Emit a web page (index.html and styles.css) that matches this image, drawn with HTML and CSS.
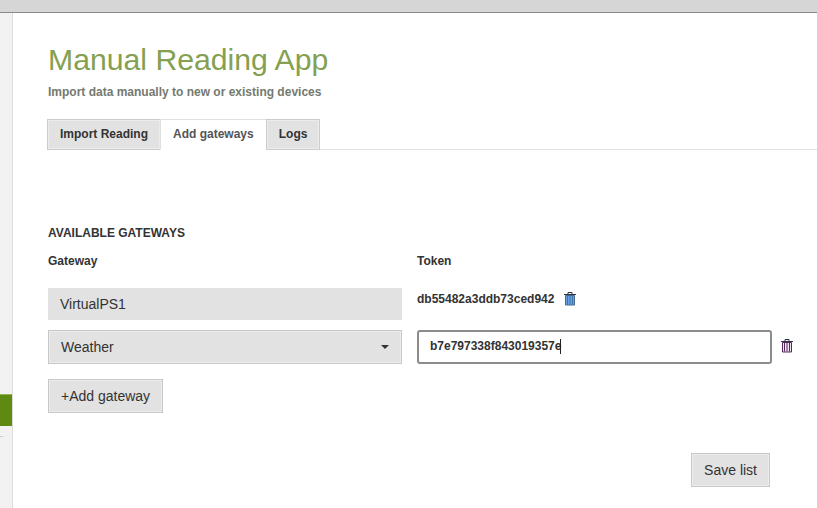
FILE: index.html
```html
<!DOCTYPE html>
<html lang="en">
<head>
<meta charset="utf-8">
<title>Manual Reading App</title>
<link rel="stylesheet" href="styles.css">
</head>
<body>
<div class="topbar"></div>
<div class="shell">
  <aside class="rail">
    <div class="rail-active"></div>
    <div class="rail-tick"></div>
  </aside>
  <main class="content">
    <h1 class="title">Manual Reading App</h1>
    <p class="subtitle">Import data manually to new or existing devices</p>
    <nav class="tabs">
      <a class="tab">Import Reading</a>
      <a class="tab tab-active">Add gateways</a>
      <a class="tab">Logs</a>
    </nav>
    <h2 class="section">AVAILABLE GATEWAYS</h2>
    <div class="grid">
      <div class="head">Gateway</div>
      <div class="head">Token</div>

      <div class="static-name">VirtualPS1</div>
      <div class="token-row">
        <span class="token">db55482a3ddb73ced942</span>
        <svg class="trash trash-blue" viewBox="0 0 12 14" width="12" height="14"><path class="can" d="M1.500 3.500h9v9.500h-9z"/><path class="bars" d="M3.500 4v8.500M6 4v8.500M8.500 4v8.500"/><path class="lid" d="M4 2V.5h4V2M0 2.500h12"/></svg>
      </div>

      <div class="select">Weather<span class="caret"></span></div>
      <div class="token-edit">
        <div class="input"><span>b7e797338f843019357e</span><i class="cursor"></i></div>
        <svg class="trash trash-purple" viewBox="0 0 12 14" width="12" height="14"><path class="can" d="M1.500 3.500h9v9.500h-9z"/><path class="bars" d="M3.500 4v8.500M6 4v8.500M8.500 4v8.500"/><path class="lid" d="M4 2V.5h4V2M0 2.500h12"/></svg>
      </div>
    </div>
    <button class="btn add">+Add gateway</button>
    <div class="actions"><button class="btn">Save list</button></div>
  </main>
</div>
</body>
</html>
```
FILE: styles.css
```css
* { box-sizing: border-box; }
html, body { margin: 0; height: 100%; overflow: hidden; }
body { font-family: "Liberation Sans", Arial, sans-serif; color: #333; background: #fff; display: flex; flex-direction: column; }
.topbar { height: 13px; flex: none; background: #d6d6d6; border-bottom: 1px solid #8a8a8a; }
.shell { flex: 1; display: flex; min-height: 0; }
.rail { width: 13px; flex: none; background: #f2f2f2; border-right: 1px solid #dcdcdc; padding-top: 381px; }
.rail-active { height: 32px; width: 12px; background: #5f8a12; border-top: 1px solid #8fb84a; }
.rail-tick { width: 3px; height: 1px; background: #ccc; margin-top: 10px; }
.content { flex: 1; min-width: 0; padding: 0 0 0 35px; }
.title { margin: 29px 0 0; font-size: 30.2px; line-height: 36px; font-weight: 400; color: #84a050; }
.subtitle { margin: 6px 0 0; font-size: 12px; line-height: 16px; font-weight: 700; color: #747a70; }
.tabs { display: flex; margin-top: 19px; height: 31px; border-bottom: 1px solid #e0e0e0; }
.tab { height: 31px; padding: 0 12px 2px; display: flex; align-items: center; font-size: 12px; font-weight: 700; background: #e2e2e2; border: 1px solid #ccc; box-shadow: inset 0 0 0 1px #ececec; border-right-width: 0; }
.tab:first-child { margin-left: -1px; }
.tab:last-child { border-right-width: 1px; }
.tab-active { background: #fff; box-shadow: none; color: #555; border-color: #e0e0e0; border-bottom-color: #fff; border-right: 1px solid #e0e0e0; margin-right: -1px; }
.section { margin: 75px 0 0; font-size: 12px; line-height: 16px; font-weight: 700; color: #333; }
.grid { display: grid; grid-template-columns: 354px 1fr; column-gap: 15px; margin-top: 12px; }
.head { font-size: 12px; line-height: 16px; font-weight: 700; }
.static-name { grid-column: 1; margin-top: 19px; height: 32px; background: #e2e2e2; padding-left: 12px; font-size: 14px; line-height: 32px; }
.token-row { margin-top: 19px; height: 32px; display: flex; align-items: center; gap: 10px; padding-bottom: 10px; }
.token { font-size: 12px; font-weight: 700; }
.select { margin-top: 10px; height: 34px; background: #e2e2e2; border: 1px solid #c8c8c8; box-shadow: inset 0 0 0 1px #ececec; padding: 0 12px; font-size: 14px; line-height: 32px; display: flex; justify-content: space-between; align-items: center; }
.caret { width: 0; height: 0; border: 4px solid transparent; border-top-color: #333; border-bottom-width: 0; }
.token-edit { margin-top: 10px; display: flex; align-items: center; gap: 9px; }
.input { width: 355px; height: 34px; flex: none; border: 2px solid #8c8c8c; border-radius: 3px; padding: 0 11px 2px; display: flex; align-items: center; font-size: 12px; font-weight: 700; }
.cursor { width: 1px; height: 15px; background: #222; margin-left: -1px; }
.trash { flex: none; fill: none; }
.trash .lid { stroke: #2b3440; stroke-width: 1; }
.trash-purple { margin-bottom: 2px; }
.trash-blue .can { fill: #6aa2e0; stroke: #46698f; }
.trash-blue .bars { stroke: #3f73ad; }
.trash-purple .can { fill: #efe6f0; stroke: #55285c; }
.trash-purple .bars { stroke: #55285c; }
.btn { height: 34px; padding: 0 12px; background: #e2e2e2; border: 1px solid #c8c8c8; box-shadow: inset 0 0 0 1px #ececec; font: 14px "Liberation Sans", Arial, sans-serif; color: #333; }
.add { display: block; margin-top: 15px; }
.actions { display: flex; justify-content: flex-end; margin-top: 40px; padding-right: 47px; }
```
